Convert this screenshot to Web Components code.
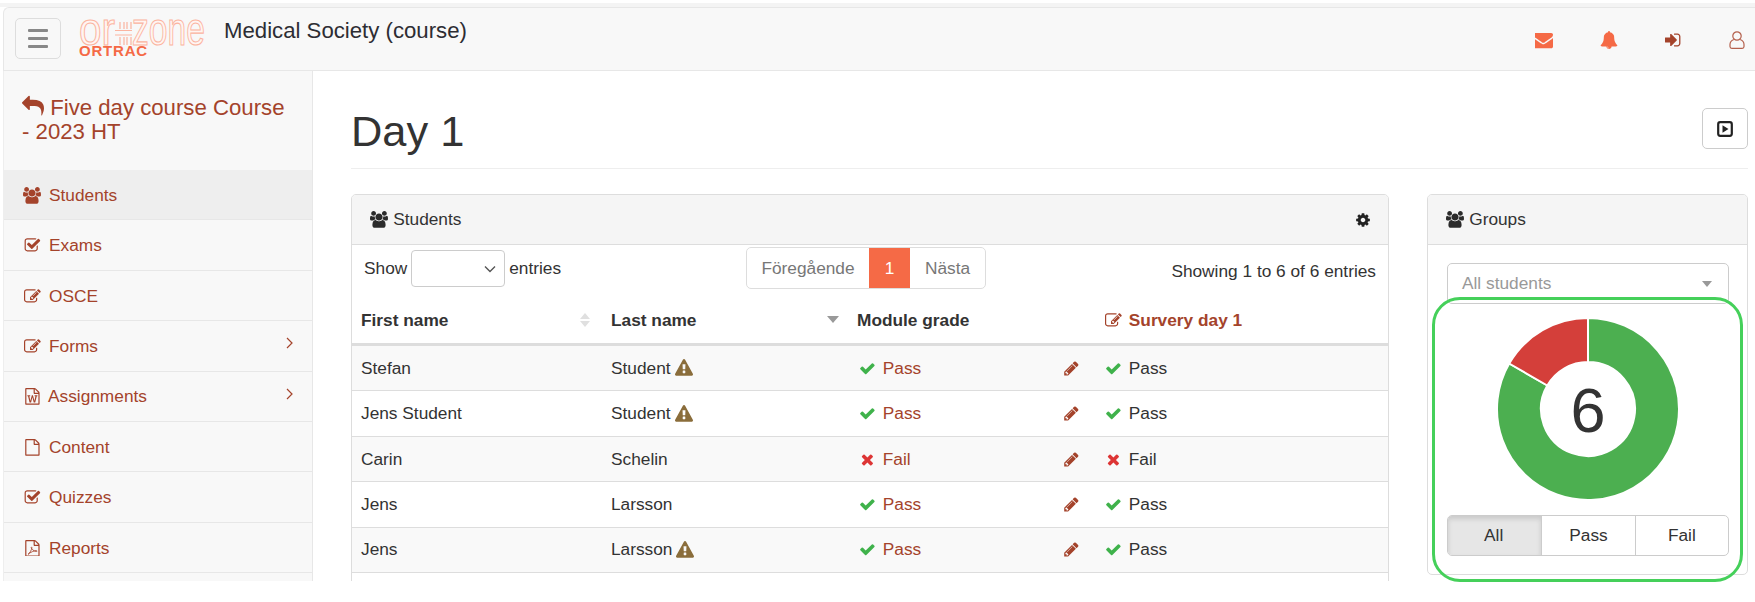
<!DOCTYPE html>
<html lang="en">
<head>
<meta charset="utf-8">
<title>Day 1</title>
<style>
  html, body { margin: 0; background: #fff; }
  body { height: 602px; overflow: hidden; font: 17.3px/1.2 "Liberation Sans", Arial, sans-serif; color: #333; }
</style>
</head>
<body>
<app-shell>
  <top-nav slot="top" heading="Medical Society (course)"></top-nav>

  <side-nav slot="side" back="Five day course Course - 2023 HT">
    <nav-item icon="users" active>Students</nav-item>
    <nav-item icon="check-square">Exams</nav-item>
    <nav-item icon="edit">OSCE</nav-item>
    <nav-item icon="edit" arrow>Forms</nav-item>
    <nav-item icon="file-word" arrow>Assignments</nav-item>
    <nav-item icon="file">Content</nav-item>
    <nav-item icon="check-square">Quizzes</nav-item>
    <nav-item icon="file-pdf">Reports</nav-item>
    <nav-item></nav-item>
  </side-nav>

  <page-head heading="Day 1"></page-head>

  <panel-row>
    <data-panel icon="users" heading="Students" gear>
      <table-tools></table-tools>
      <table-head></table-head>
      <student-row first="Stefan" last="Student" warn module="pass" survey="pass"></student-row>
      <student-row first="Jens Student" last="Student" warn module="pass" survey="pass"></student-row>
      <student-row first="Carin" last="Schelin" module="fail" survey="fail"></student-row>
      <student-row first="Jens" last="Larsson" module="pass" survey="pass"></student-row>
      <student-row first="Jens" last="Larsson" warn module="pass" survey="pass"></student-row>
      <student-row></student-row>
    </data-panel>

    <data-panel icon="users" heading="Groups">
      <group-card pass="5" fail="1"></group-card>
    </data-panel>
  </panel-row>

  <callout-ring slot="over"></callout-ring>
</app-shell>

<script>
const FILE_BASE = 'M1596 380q28 28 48 76t20 88v1152q0 40-28 68t-68 28h-1344q-40 0-68-28t-28-68v-1600q0-40 28-68t68-28h896q40 0 88 20t76 48zm-444-244v376h376q-10-29-22-41l-313-313q-12-12-41-22zm384 1528v-1024h-416q-40 0-68-28t-28-68v-416h-768v1536h1280z';

const ICONS = {
  users: { w: 2048, d: 'M593 896q-162 5-265 128h-134q-82 0-138-40.500t-56-118.500q0-353 124-353 6 0 43.500 21t97.500 42.500 119 21.500q67 0 133-23-5 37-5 66 0 139 81 256zm1071 637q0 120-73 189.500t-194 69.500h-874q-121 0-194-69.500t-73-189.500q0-53 3.500-103.500t14-109 26.500-108.500 43-97.500 62-81 85.500-53.500 111.500-20q10 0 43 21.500t73 48 107 48 135 21.500 135-21.500 107-48 73-48 43-21.500q61 0 111.500 20t85.500 53.500 62 81 43 97.500 26.500 108.500 14 109 3.500 103.500zm-1024-1277q0 106-75 181t-181 75-181-75-75-181 75-181 181-75 181 75 75 181zm704 384q0 159-112.500 271.500t-271.500 112.500-271.500-112.500-112.500-271.500 112.500-271.500 271.500-112.500 271.500 112.500 112.500 271.500zm576 225q0 78-56 118.500t-138 40.500h-134q-103-123-265-128 81-117 81-256 0-29-5-66 66 23 133 23 59 0 119-21.500t97.500-42.500 43.500-21q124 0 124 353zm-128-609q0 106-75 181t-181 75-181-75-75-181 75-181 181-75 181 75 75 181z' },
  'check-square': { d: 'M1472 930v318q0 119-84.500 203.500t-203.500 84.500h-832q-119 0-203.500-84.500t-84.500-203.500v-832q0-119 84.500-203.500t203.500-84.500h832q63 0 117 25 15 7 18 23 3 17-9 29l-49 49q-10 10-23 10-3 0-9-2-23-6-45-6h-832q-66 0-113 47t-47 113v832q0 66 47 113t113 47h832q66 0 113-47t47-113v-254q0-13 9-22l64-64q10-10 23-10 6 0 12 3 20 8 20 29zm231-489l-814 814q-24 24-57 24t-57-24l-430-430q-24-24-24-57t24-57l110-110q24-24 57-24t57 24l263 263 647-647q24-24 57-24t57 24l110 110q24 24 24 57t-24 57z' },
  edit: { d: 'M888 1184l116-116-152-152-116 116v56h96v96h56zm440-720q-16-16-33 1l-350 350q-17 17-1 33t33-1l350-350q17-17 1-33zm80 594v190q0 119-84.500 203.500t-203.500 84.500h-832q-119 0-203.500-84.500t-84.500-203.500v-832q0-119 84.500-203.500t203.500-84.500h832q63 0 117 25 15 7 18 23 3 17-9 29l-49 49q-14 14-32 8-23-6-45-6h-832q-66 0-113 47t-47 113v832q0 66 47 113t113 47h832q66 0 113-47t47-113v-126q0-13 9-22l64-64q15-15 35-7t20 29zm-96-738l288 288-672 672h-288v-288zm444 132l-92 92-288-288 92-92q28-28 68-28t68 28l152 152q28 28 28 68t-28 68z' },
  file: { d: FILE_BASE },
  'file-word': { d: FILE_BASE + 'm-1175-896v107h70l164 661h159l128-485q7-20 10-46 2-16 2-24h4l3 24q1 3 3.500 20t5.500 26l128 485h159l164-661h70v-107h-300v107h90l-99 438q-5 20-7 46l-2 21h-4q0-3-.500-6.500t-1.500-8-1-6.500q-1-5-4-21t-5-25l-144-545h-114l-144 545q-2 9-4.500 24.500t-3.500 21.500l-4 21h-4l-2-21q-2-26-7-46l-99-438h90v-107h-300z' },
  'file-pdf': { d: FILE_BASE, extra: '<path d="M430 1530C640 1380 800 1060 850 830C860 760 790 720 770 790C750 900 1000 1200 1330 1230C1420 1230 1400 1130 1320 1130C1100 1130 680 1300 430 1530Z" fill="none" stroke="currentColor" stroke-width="90"/>' },
  reply: { d: 'M1792 1120q0 166-127 451-3 7-10.500 24t-13.500 30-13 22q-12 17-28 17-15 0-23.500-10t-8.500-25q0-9 2.500-26.500t2.500-23.500q5-68 5-123 0-101-17.500-181t-48.500-138.500-80-101-105.500-69.500-133-42.500-154-21.500-175.500-6h-224v256q0 26-19 45t-45 19-45-19l-512-512q-19-19-19-45t19-45l512-512q19-19 45-19t45 19 19 45v256h224q713 0 875 403 53 134 53 333z' },
  envelope: { d: 'M1664 710v794q0 66-47 113t-113 47h-1472q-66 0-113-47t-47-113v-794q44 49 101 87 362 246 497 345 57 42 92.500 65.500t94.500 48 110 24.500h2q51 0 110-24.500t94.500-48 92.500-65.500q170-123 498-345 57-39 100-87zm0-294q0 79-49 151t-122 123q-376 261-468 325-10 7-42.500 30.500t-54 38-52 32.500-57.500 27-50 9h-2q-23 0-50-9t-57.500-27-52-32.500-54-38-42.500-30.500q-91-64-262-182.500t-205-142.500q-62-42-117-115.500t-55-136.500q0-78 41.500-130t118.500-52h1472q65 0 112.500 47t47.500 113z', box: '0 128 1664 1536' },
  bell: { d: 'M912 1696q0-16-16-16-59 0-101.500-42.500t-42.500-101.500q0-16-16-16t-16 16q0 73 51.500 124.500t124.500 51.500q16 0 16-16zm816-288q0 52-38 90t-90 38h-448q0 106-75 181t-181 75-181-75-75-181h-448q-52 0-90-38t-38-90q50-42 91-88t85-119.500 74.500-158.500 50-206 19.500-260q0-152 117-282.500t307-158.500q-8-19-8-39 0-40 28-68t68-28 68 28 28 68q0 20-8 39 190 28 307 158.500t117 282.500q0 139 19.500 260t50 206 74.500 158.500 85 119.500 91 88z' },
  'sign-in': { d: 'M1184 896q0 26-19 45l-544 544q-19 19-45 19t-45-19-19-45v-288h-448q-26 0-45-19t-19-45v-384q0-26 19-45t45-19h448v-288q0-26 19-45t45-19 45 19l544 544q19 19 19 45zm352-352v704q0 119-84.500 203.500t-203.500 84.500h-320q-13 0-22.500-9.500t-9.500-22.500q0-4-1-20t-.500-26.500 3-23.500 10-19.500 20.500-6.500h320q66 0 113-47t47-113v-704q0-66-47-113t-113-47h-312l-11.500-1-11.500-3-8-5.500-7-9-2-13.500q0-4-1-20t-.500-26.500 3-23.500 10-19.500 20.500-6.500h320q119 0 203.500 84.500t84.500 203.500z' },
  cog: { d: 'M1152 896q0-106-75-181t-181-75-181 75-75 181 75 181 181 75 181-75 75-181zm512-109v222q0 12-8 23t-20 13l-185 28q-19 54-39 91 35 50 107 138 10 12 10 25t-9 23q-27 37-99 108t-94 71q-12 0-26-9l-138-108q-44 23-91 38-16 136-29 186-7 28-36 28h-222q-14 0-24.500-8.500t-11.500-21.500l-28-184q-49-16-90-37l-141 107q-10 9-25 9-14 0-25-11-126-114-165-168-7-10-7-23 0-12 8-23 15-21 51-66.500t54-70.500q-27-50-41-99l-183-27q-13-2-21-12.500t-8-23.500v-222q0-12 8-23t19-13l186-28q14-46 39-92-40-57-107-138-10-12-10-24 0-10 9-23 26-36 98.500-107.500t94.500-71.500q13 0 26 10l138 107q44-23 91-38 16-136 29-186 7-28 36-28h222q14 0 24.500 8.500t11.500 21.500l28 184q49 16 90 37l142-107q9-9 24-9 13 0 25 10 129 119 165 170 7 8 7 22 0 12-8 23-15 21-51 66.500t-54 70.500q26 50 41 98l183 28q13 2 21 12.500t8 23.500z' },
  warning: { d: 'M1024 1375v-190q0-14-9.500-23.500t-22.500-9.500h-192q-13 0-22.500 9.500t-9.500 23.500v190q0 14 9.500 23.500t22.500 9.500h192q13 0 22.500-9.500t9.500-23.500zm-2-374l18-459q0-12-10-19-13-11-24-11h-220q-11 0-24 11-10 7-10 21l17 457q0 10 10 16.500t24 6.500h185q14 0 23.500-6.500t10.500-16.500zm-14-934l768 1408q35 63-2 126-17 29-46.500 46t-63.500 17h-1536q-34 0-63.500-17t-46.500-46q-37-63-2-126l768-1408q17-31 47-49t65-18 65 18 47 49z' },
  check: { d: 'M1671 566q0 40-28 68l-724 724-136 136q-28 28-68 28t-68-28l-136-136-362-362q-28-28-28-68t28-68l136-136q28-28 68-28t68 28l294 295 656-657q28-28 68-28t68 28l136 136q28 28 28 68z' },
  times: { d: 'M1490 1322q0 40-28 68l-136 136q-28 28-68 28t-68-28l-294-294-294 294q-28 28-68 28t-68-28l-136-136q-28-28-28-68t28-68l294-294-294-294q-28-28-28-68t28-68l136-136q28-28 68-28t68 28l294 294 294-294q28-28 68-28t68 28l136 136q28 28 28 68t-28 68l-294 294 294 294q28 28 28 68z' },
  pencil: { d: 'M491 1536l91-91-235-235-91 91v107h128v128h107zm523-928q0-22-22-22-10 0-17 7l-542 542q-7 7-7 17 0 22 22 22 10 0 17-7l542-542q7-7 7-17zm-54-192l416 416-832 832h-416v-416zm683 96q0 53-37 90l-166 166-416-416 166-165q36-38 90-38 53 0 91 38l235 234q37 39 37 91z' }
};

class FaIcon extends HTMLElement {
  constructor() {
    super();
    this.attachShadow({ mode: 'open' });
  }

  connectedCallback() {
    const icon = ICONS[this.getAttribute('name')];
    const w = icon.w || 1792;
    const box = icon.box || `0 0 ${w} 1792`;
    const ratio = icon.box ? 1 : w / 1792;
    this.shadowRoot.innerHTML = `
      <style>
        :host { display: inline-flex; flex: none; }
        svg { display: block; height: var(--icon-size, 16.8px); width: calc(var(--icon-size, 16.8px) * ${ratio}); fill: currentColor; }
      </style>
      <svg viewBox="${box}" aria-hidden="true"><path d="${icon.d}"/>${icon.extra || ''}</svg>`;
  }
}
customElements.define('fa-icon', FaIcon);

const shellTemplate = document.createElement('template');
shellTemplate.innerHTML = `
<style>
  :host { display: block; position: relative; height: 602px; overflow: hidden; }
  .strip { margin-top: 3px; height: 4px; background: #f4f4f4; }
  .frame { margin-left: 3px; height: 574px; overflow: hidden; display: flex; flex-direction: column; }
  .body { display: flex; flex: 1; min-height: 0; }
  .main { flex: 1; min-width: 0; padding: 37px 7px 0 38px; }
</style>
<div class="strip"></div>
<div class="frame">
  <slot name="top"></slot>
  <div class="body">
    <slot name="side"></slot>
    <div class="main"><slot></slot></div>
  </div>
</div>
<slot name="over"></slot>
`;

class AppShell extends HTMLElement {
  constructor() {
    super();
    this.attachShadow({ mode: 'open' }).appendChild(shellTemplate.content.cloneNode(true));
  }
}
customElements.define('app-shell', AppShell);

const topNavTemplate = document.createElement('template');
topNavTemplate.innerHTML = `
<style>
  :host { display: flex; flex: none; box-sizing: border-box; height: 64px; padding-left: 11px; background: #f8f8f8;
    border: 1px solid #e7e7e7; border-width: 1px 0 1px 1px; border-top-left-radius: 6px; }
  .burger { box-sizing: border-box; width: 46px; height: 41px; margin-top: 10px; border: 1px solid #ddd; border-radius: 5px;
    display: flex; flex-direction: column; justify-content: center; gap: 5px; align-items: center; }
  .burger i { display: block; width: 20px; height: 3px; background: #888; border-radius: 1px; }
  .logo { display: block; margin: 12px 0 0 17px; overflow: visible; }
  h1 { margin: 11px 0 0 16px; font: 400 22.2px/24px "Liberation Sans", Arial, sans-serif; color: #2d2d33; }
  .actions { margin-left: auto; display: flex; gap: 47px; padding: 23px 9px 0 0; --icon-size: 18px; align-items: flex-start; }
  .hot { color: #f56a46; }
  .cold { color: #a4432b; }
  .user { display: block; width: 18px; height: 18px; margin-left: -2px; }
</style>
<div class="burger"><i></i><i></i><i></i></div>
<svg class="logo" width="130" height="38" viewBox="0 0 130 38">
  <g fill="#fff5f2" stroke="#fbb4a0" stroke-width="1.100" font-family="Liberation Sans, Arial, sans-serif" font-size="46">
    <text x="1" y="25" textLength="36" lengthAdjust="spacingAndGlyphs">or</text>
    <text x="54" y="25" textLength="73" lengthAdjust="spacingAndGlyphs">zone</text>
  </g>
  <path d="M42 2v7M46 2v7M42 17v8M46 17v8M37 10.500h17M37 15h17M49 2v7M53 2v7M49 17v8M53 17v8" fill="none" stroke="#fbb4a0" stroke-width="1.200"/>
  <text x="1" y="35.500" font-family="Liberation Sans, Arial, sans-serif" font-weight="700" font-size="15" letter-spacing="0.800" fill="#f56a46">ORTRAC</text>
</svg>
<h1></h1>
<div class="actions">
  <fa-icon class="hot" name="envelope"></fa-icon>
  <fa-icon class="hot" name="bell"></fa-icon>
  <fa-icon class="cold" name="sign-in"></fa-icon>
  <svg class="user cold" viewBox="0 0 18 18" fill="none" stroke="#b4604c" stroke-width="1.200">
    <circle cx="9" cy="5" r="4.200"/>
    <path d="M5.800 8.500C3.500 9.500 2 11 2 13.500V15.500c0 1 .8 1.800 1.800 1.800h10.400c1 0 1.800-.8 1.800-1.800V13.500c0-2.500-1.500-4-3.800-5"/>
  </svg>
</div>
`;

class TopNav extends HTMLElement {
  constructor() {
    super();
    this.attachShadow({ mode: 'open' }).appendChild(topNavTemplate.content.cloneNode(true));
  }

  connectedCallback() {
    this.shadowRoot.querySelector('h1').textContent = this.getAttribute('heading');
  }
}
customElements.define('top-nav', TopNav);

const sideNavTemplate = document.createElement('template');
sideNavTemplate.innerHTML = `
<style>
  :host { display: block; flex: none; box-sizing: border-box; width: 310px; background: #f8f8f8;
    border-right: 1px solid #e7e7e7; border-left: 1px solid #eee; }
  .back { box-sizing: border-box; height: 99px; padding: 24px 21px 0 18px; font-size: 22.2px; line-height: 24px; color: #a4432b; }
  .back fa-icon { --icon-size: 22px; vertical-align: -2px; display: inline-block; }
</style>
<div class="back"><fa-icon name="reply"></fa-icon> <span></span></div>
<slot></slot>
`;

class SideNav extends HTMLElement {
  constructor() {
    super();
    this.attachShadow({ mode: 'open' }).appendChild(sideNavTemplate.content.cloneNode(true));
  }

  connectedCallback() {
    this.shadowRoot.querySelector('span').textContent = this.getAttribute('back');
  }
}
customElements.define('side-nav', SideNav);

const navItemTemplate = document.createElement('template');
navItemTemplate.innerHTML = `
<style>
  :host { display: flex; align-items: center; box-sizing: border-box; height: 50.400px; padding: 1px 19px 0 20px;
    border-bottom: 1px solid #e7e7e7; color: #a4432b; }
  :host([active]) { background: #eee; }
  .slot { width: 25px; flex: none; display: flex; }
  :host([icon="users"]) .slot { margin-left: -1px; width: 26px; }
  :host([icon="file-word"]) .slot { width: 24px; }
  .arrow { margin: 0 0 6px auto; display: none; }
  :host([arrow]) .arrow { display: block; }
</style>
<div class="slot"></div>
<slot></slot>
<svg class="arrow" width="7" height="12" viewBox="0 0 7 12" fill="none" stroke="#a4432b" stroke-width="1.200"><path d="M1 1l5 5-5 5"/></svg>
`;

class NavItem extends HTMLElement {
  constructor() {
    super();
    this.attachShadow({ mode: 'open' }).appendChild(navItemTemplate.content.cloneNode(true));
  }

  connectedCallback() {
    const name = this.getAttribute('icon');
    if (name) {
      const icon = document.createElement('fa-icon');
      icon.setAttribute('name', name);
      this.shadowRoot.querySelector('.slot').appendChild(icon);
    }
  }
}
customElements.define('nav-item', NavItem);

const pageHeadTemplate = document.createElement('template');
pageHeadTemplate.innerHTML = `
<style>
  :host { display: flex; justify-content: space-between; align-items: flex-start; height: 60px; border-bottom: 1px solid #eee; }
  h1 { margin: 0; font: 400 43.400px/46px "Liberation Sans", Arial, sans-serif; color: #333; }
  button { box-sizing: border-box; width: 46px; height: 41px; padding: 0; background: #fff; border: 1px solid #ccc; border-radius: 5px;
    display: flex; align-items: center; justify-content: center; }
</style>
<h1></h1>
<button aria-label="Play">
  <svg width="16" height="16" viewBox="0 0 16 16"><rect x="1.200" y="1.200" width="13.600" height="13.600" rx="2" fill="none" stroke="#222" stroke-width="2.200"/><path d="M5.500 4.200l6 3.800-6 3.800z" fill="#222"/></svg>
</button>
`;

class PageHead extends HTMLElement {
  constructor() {
    super();
    this.attachShadow({ mode: 'open' }).appendChild(pageHeadTemplate.content.cloneNode(true));
  }

  connectedCallback() {
    this.shadowRoot.querySelector('h1').textContent = this.getAttribute('heading');
  }
}
customElements.define('page-head', PageHead);

const panelRowTemplate = document.createElement('template');
panelRowTemplate.innerHTML = `
<style>
  :host { display: grid; grid-template-columns: 1038px 321px; justify-content: space-between; align-items: start; margin-top: 25px; }
</style>
<slot></slot>
`;

class PanelRow extends HTMLElement {
  constructor() {
    super();
    this.attachShadow({ mode: 'open' }).appendChild(panelRowTemplate.content.cloneNode(true));
  }
}
customElements.define('panel-row', PanelRow);

const panelTemplate = document.createElement('template');
panelTemplate.innerHTML = `
<style>
  :host { display: block; background: #fff; border: 1px solid #ddd; border-radius: 5px; overflow: hidden; }
  header { box-sizing: border-box; height: 50px; display: flex; align-items: center; gap: 4px; padding: 0 17px 0 18px;
    background: #f5f5f5; border-bottom: 1px solid #ddd; }
  .gear { margin-left: auto; display: none; --icon-size: 16px; color: #222; }
  :host([gear]) .gear { display: inline-flex; }
  .icon { color: #2b2b2b; }
</style>
<header>
  <fa-icon class="icon" name="users"></fa-icon>
  <span class="title"></span>
  <fa-icon class="gear" name="cog"></fa-icon>
</header>
<slot></slot>
`;

class DataPanel extends HTMLElement {
  constructor() {
    super();
    this.attachShadow({ mode: 'open' }).appendChild(panelTemplate.content.cloneNode(true));
  }

  connectedCallback() {
    this.shadowRoot.querySelector('.title').textContent = this.getAttribute('heading');
  }
}
customElements.define('data-panel', DataPanel);

const toolsTemplate = document.createElement('template');
toolsTemplate.innerHTML = `
<style>
  :host { display: grid; grid-template-columns: 394px 240px 1fr; height: 52px; box-sizing: border-box; }
  .show { display: flex; align-items: center; gap: 4px; padding: 5px 0 0 12px; height: 37px; }
  select { box-sizing: border-box; width: 94px; height: 37px; border: 1px solid #ccc; border-radius: 4px; font: inherit; color: #333;
    appearance: none; -webkit-appearance: none;
    background: #fff url("data:image/svg+xml,%3Csvg xmlns='http://www.w3.org/2000/svg' width='12' height='8'%3E%3Cpath d='M1 1.500l5 5 5-5' fill='none' stroke='%23555' stroke-width='1.400'/%3E%3C/svg%3E") no-repeat right 8px center; }
  .pages { display: flex; height: 42px; margin-top: 2px; box-sizing: border-box; border: 1px solid #ddd; border-radius: 5px; color: #777; overflow: hidden; }
  .pages span { display: flex; align-items: center; justify-content: center; }
  .prev { width: 122px; }
  .cur { width: 41px; background: #f56a46; color: #fff; }
  .next { flex: 1; }
  .info { text-align: right; padding: 16px 12px 0 0; line-height: 20px; color: #333; }
</style>
<div class="show">Show <select aria-label="entries"><option></option></select> entries</div>
<div class="pages"><span class="prev">Föregående</span><span class="cur">1</span><span class="next">Nästa</span></div>
<div class="info">Showing 1 to 6 of 6 entries</div>
`;

class TableTools extends HTMLElement {
  constructor() {
    super();
    this.attachShadow({ mode: 'open' }).appendChild(toolsTemplate.content.cloneNode(true));
  }
}
customElements.define('table-tools', TableTools);

const tableHeadTemplate = document.createElement('template');
tableHeadTemplate.innerHTML = `
<style>
  :host { display: grid; grid-template-columns: 250px 245px 248px 1fr; height: 49px; box-sizing: border-box; align-items: center;
    border-bottom: 3px solid #ddd; font-weight: 700; color: #333; }
  div { display: flex; align-items: center; box-sizing: border-box; padding: 0 10px 0 9px; }
  .sort { margin-left: auto; }
  .link { color: #a4432b; gap: 7px; padding-left: 10px; }
  .mod { padding-left: 10px; }
</style>
<div>First name
  <svg class="sort" style="margin-right:1px" width="12" height="16" viewBox="0 0 12 16" fill="#e0e0e0"><path d="M6 1l5 6H1zM1 9h10l-5 6z"/></svg></div>
<div>Last name
  <svg class="sort" style="margin-right:-2px" width="12" height="8" viewBox="0 0 12 8" fill="#999"><path d="M0 0h12l-6 7z"/></svg></div>
<div class="mod">Module grade</div>
<div class="link"><fa-icon name="edit"></fa-icon>Survery day 1</div>
`;

class TableHead extends HTMLElement {
  constructor() {
    super();
    this.attachShadow({ mode: 'open' }).appendChild(tableHeadTemplate.content.cloneNode(true));
  }
}
customElements.define('table-head', TableHead);

const rowTemplate = document.createElement('template');
rowTemplate.innerHTML = `
<style>
  :host { display: grid; grid-template-columns: 250px 245px 248px 1fr; height: 45.400px; box-sizing: border-box; align-items: center;
    border-bottom: 1px solid #ddd; background: #fff; color: #333; }
  :host(:nth-of-type(odd)) { background: #f9f9f9; }
  div { display: flex; align-items: center; box-sizing: border-box; padding: 0 10px 0 9px; }
  .last { gap: 4px; }
  .warn { color: #8a6d3b; --icon-size: 18px; }
  .module { padding: 0 15px 0 12px; color: #a4432b; }
  .survey { padding: 0 0 0 10px; }
  .mark { margin-right: 7px; }
  .pass { color: #3fb24b; }
  .fail { color: #dd3535; }
  .edit { margin-left: auto; color: #a4432b; }
</style>
<div class="first"></div>
<div class="last"></div>
<div class="module"></div>
<div class="survey"></div>
`;

class StudentRow extends HTMLElement {
  constructor() {
    super();
    this.attachShadow({ mode: 'open' }).appendChild(rowTemplate.content.cloneNode(true));
  }

  connectedCallback() {
    const first = this.getAttribute('first');
    if (!first) { return; }
    const root = this.shadowRoot;
    root.querySelector('.first').textContent = first;
    root.querySelector('.last').innerHTML = this.getAttribute('last')
      + (this.hasAttribute('warn') ? '<fa-icon class="warn" name="warning"></fa-icon>' : '');
    root.querySelector('.module').innerHTML = this.grade(this.getAttribute('module'))
      + '<fa-icon class="edit" name="pencil"></fa-icon>';
    root.querySelector('.survey').innerHTML = this.grade(this.getAttribute('survey'));
  }

  grade(value) {
    const passed = value === 'pass';
    return `<fa-icon class="mark ${value}" name="${passed ? 'check' : 'times'}"></fa-icon>${passed ? 'Pass' : 'Fail'}`;
  }
}
customElements.define('student-row', StudentRow);

const groupTemplate = document.createElement('template');
groupTemplate.innerHTML = `
<style>
  :host { display: block; padding: 18px 18px 18px 19px; }
  .pick { box-sizing: border-box; height: 41px; padding: 0 16px 0 14px; display: flex; align-items: center; justify-content: space-between;
    border: 1px solid #ccc; border-radius: 5px; color: #999; }
  .pick i { display: block; width: 0; height: 0; border: 5px solid transparent; border-top: 6px solid #999; border-bottom: 0; }
  donut-chart { margin-top: 14px; }
  .buttons { display: grid; grid-template-columns: repeat(3, 1fr); height: 41px; margin-top: 15px; border: 1px solid #ccc; border-radius: 5px; overflow: hidden; box-sizing: border-box; color: #333; }
  .buttons span { display: flex; align-items: center; justify-content: center; border-left: 1px solid #ccc; }
  .buttons span:first-child { border-left: 0; background: #e6e6e6; box-shadow: inset 0 3px 5px rgba(0,0,0,.125); border-right: 1px solid #adadad; margin-right: -1px; padding-right: 2px; }
</style>
<div class="pick">All students<i></i></div>
<donut-chart></donut-chart>
<div class="buttons"><span>All</span><span>Pass</span><span>Fail</span></div>
`;

class GroupCard extends HTMLElement {
  constructor() {
    super();
    this.attachShadow({ mode: 'open' }).appendChild(groupTemplate.content.cloneNode(true));
  }

  connectedCallback() {
    const donut = this.shadowRoot.querySelector('donut-chart');
    donut.setAttribute('pass', this.getAttribute('pass'));
    donut.setAttribute('fail', this.getAttribute('fail'));
  }
}

class DonutChart extends HTMLElement {
  static get observedAttributes() { return ['pass', 'fail']; }

  constructor() {
    super();
    this.attachShadow({ mode: 'open' });
  }

  attributeChangedCallback() {
    const pass = Number(this.getAttribute('pass'));
    const fail = Number(this.getAttribute('fail'));
    const total = pass + fail;
    const failAngle = fail / total * 360;
    this.shadowRoot.innerHTML = `
      <style>
        :host { display: block; height: 182px; }
        svg { display: block; margin: 0 auto; }
        text { font: 400 63px "Liberation Sans", Arial, sans-serif; fill: #333; }
      </style>
      <svg width="182" height="182" viewBox="-1 -1 182 182">
        <path d="${this.arc(0, 360 - failAngle)}" fill="#4caf50" stroke="#fff" stroke-width="2"/>
        <path d="${this.arc(360 - failAngle, 360)}" fill="#d43f3a" stroke="#fff" stroke-width="2"/>
        <text x="90" y="113" text-anchor="middle">${total}</text>
      </svg>`;
  }

  arc(from, to) {
    const R = 91;
    const r = 47;
    const at = (rad, deg) => {
      const a = (deg - 90) * Math.PI / 180;
      return `${(90 + rad * Math.cos(a)).toFixed(2)} ${(90 + rad * Math.sin(a)).toFixed(2)}`;
    };
    const big = to - from > 180 ? 1 : 0;
    return `M${at(R, from)}A${R} ${R} 0 ${big} 1 ${at(R, to)}L${at(r, to)}A${r} ${r} 0 ${big} 0 ${at(r, from)}Z`;
  }
}
customElements.define('donut-chart', DonutChart);
customElements.define('group-card', GroupCard);

const ringTemplate = document.createElement('template');
ringTemplate.innerHTML = `
<style>
  :host { position: absolute; left: 1432px; top: 297px; width: 311px; height: 285px; box-sizing: border-box;
    border: 3px solid #45d05a; border-radius: 28px; pointer-events: none; }
</style>
`;

class CalloutRing extends HTMLElement {
  constructor() {
    super();
    this.attachShadow({ mode: 'open' }).appendChild(ringTemplate.content.cloneNode(true));
  }
}
customElements.define('callout-ring', CalloutRing);
</script>
</body>
</html>
